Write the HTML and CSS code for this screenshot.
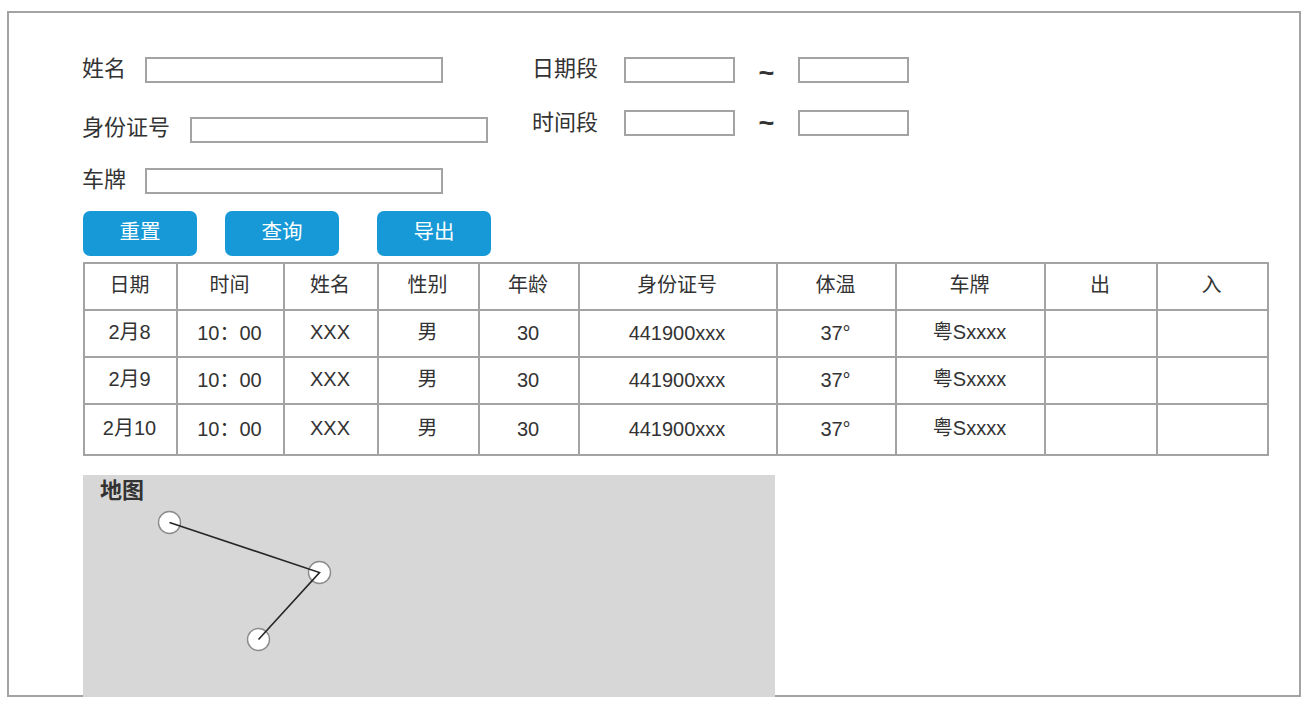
FILE: index.html
```html
<!DOCTYPE html>
<html lang="zh">
<head>
<meta charset="utf-8">
<title>查询</title>
<link rel="stylesheet" href="styles.css">
</head>
<body>
<main class="frame">
  <form class="filters">
    <div class="col col-left">
      <label class="field field-name"><span class="lbl lbl-name">姓名</span><input class="box box-wide" type="text"></label>
      <label class="field field-id"><span class="lbl lbl-id">身份证号</span><input class="box box-wide" type="text"></label>
      <label class="field field-plate"><span class="lbl lbl-name">车牌</span><input class="box box-wide" type="text"></label>
    </div>
    <div class="col col-right">
      <div class="field field-date"><span class="lbl lbl-range">日期段</span><input class="box box-short" type="text"><span class="tilde tilde-date">~</span><input class="box box-short" type="text"></div>
      <div class="field field-time"><span class="lbl lbl-range">时间段</span><input class="box box-short" type="text"><span class="tilde tilde-time">~</span><input class="box box-short" type="text"></div>
    </div>
  </form>
  <div class="actions">
    <button class="btn" type="button">重置</button>
    <button class="btn" type="button">查询</button>
    <button class="btn" type="button">导出</button>
  </div>
  <table class="grid">
    <colgroup>
      <col class="c1"><col class="c2"><col class="c3"><col class="c4"><col class="c5"><col class="c6"><col class="c7"><col class="c8"><col class="c9"><col class="c10">
    </colgroup>
    <thead>
      <tr class="row"><th>日期</th><th>时间</th><th>姓名</th><th>性别</th><th>年龄</th><th>身份证号</th><th>体温</th><th>车牌</th><th>出</th><th>入</th></tr>
    </thead>
    <tbody>
      <tr class="row"><td>2月8</td><td>10：00</td><td>XXX</td><td>男</td><td>30</td><td>441900xxx</td><td>37°</td><td>粤Sxxxx</td><td></td><td></td></tr>
      <tr class="row"><td>2月9</td><td>10：00</td><td>XXX</td><td>男</td><td>30</td><td>441900xxx</td><td>37°</td><td>粤Sxxxx</td><td></td><td></td></tr>
      <tr class="row row-last"><td>2月10</td><td>10：00</td><td>XXX</td><td>男</td><td>30</td><td>441900xxx</td><td>37°</td><td>粤Sxxxx</td><td></td><td></td></tr>
    </tbody>
  </table>
  <section class="map">
    <h2 class="map-title">地图</h2>
    <svg class="map-route" width="692" height="222" viewBox="0 0 692 222" aria-hidden="true">
      <circle class="stop" cx="86.5" cy="47.5" r="11"/>
      <circle class="stop" cx="236.5" cy="97.5" r="11"/>
      <circle class="stop" cx="175.5" cy="164.5" r="11"/>
      <polyline class="route" points="86.5,47.5 236.5,97.5 175.5,164.5"/>
    </svg>
  </section>
</main>
</body>
</html>
```
FILE: styles.css
```css
* { box-sizing: border-box; }
html, body { margin: 0; padding: 0; background: #fff; }
body {
  height: 706px;
  overflow: hidden;
  font-family: "Liberation Sans", "Noto Sans CJK SC", sans-serif;
  color: #333;
}
.frame {
  width: 1294px;
  height: 686px;
  margin: 11px 0 0 7px;
  padding: 44px 0 0 74px;
  border: 2px solid #a3a3a3;
}
.filters { display: flex; height: 154px; }
.col { display: flex; flex-direction: column; }
.col-left { width: 449px; }
.field { display: flex; align-items: center; height: 26px; }
.field-id { margin-top: 34px; }
.field-plate { margin-top: 25px; }
.field-time { margin-top: 27px; }
.lbl { font-size: 22px; line-height: 24px; position: relative; top: -1px; left: -1px; white-space: nowrap; }
.field-id .lbl { top: -2px; }
.field-time .lbl { top: 0; }
.lbl-name { width: 62px; }
.lbl-id { width: 107px; }
.lbl-range { width: 92px; }
.field-date .lbl, .field-time .lbl { left: 0; }
.box { height: 26px; padding: 0; border: 2px solid #a3a3a3; background: #fff; border-radius: 0; }
.box-wide { width: 298px; }
.box-short { width: 111px; }
.tilde {
  width: 63px;
  text-align: center;
  font-size: 27px;
  font-weight: 700;
  line-height: 24px;
}
.tilde-date { padding-top: 6px; }
.actions { display: flex; gap: 28px; height: 45px; margin-bottom: 6px; }
.btn {
  width: 114px;
  height: 45px;
  padding: 0 0 2px;
  border: 0;
  border-radius: 7px;
  background: #1699d6;
  color: #fff;
  font: 400 20.5px/1 "Liberation Sans", "Noto Sans CJK SC", sans-serif;
}
.btn + .btn + .btn { margin-left: 10px; }
.grid {
  width: 1186px;
  table-layout: fixed;
  border-collapse: collapse;
  font-size: 20px;
  text-align: center;
}
.c1 { width: 93px; }
.c2 { width: 107px; }
.c3 { width: 94px; }
.c4 { width: 101px; }
.c5 { width: 100px; }
.c6 { width: 198px; }
.c7 { width: 119px; }
.c8 { width: 149px; }
.c9 { width: 112px; }
.c10 { width: 111px; }
.row { height: 47px; }
.row-last { height: 51px; }
.grid th, .grid td {
  padding: 0 2px 2px 0;
  border: 2px solid #a3a3a3;
  font-weight: 400;
  white-space: nowrap;
}
.grid th { padding-bottom: 6px; }
.grid td:nth-child(1), .grid td:nth-child(4), .grid td:nth-child(8) { padding-bottom: 6px; }
.grid td:nth-child(2) { padding-bottom: 4px; }
.grid td:nth-child(5), .grid td:nth-child(6), .grid td:nth-child(7) { padding-bottom: 0; }
.map {
  position: relative;
  width: 692px;
  height: 222px;
  margin-top: 19px;
  background: #d7d7d7;
}
.map-title {
  margin: 0;
  padding: 3px 0 0 17px;
  font-size: 22px;
  line-height: 26px;
  font-weight: 700;
}
.map-route { position: absolute; left: 0; top: 0; }
.stop { fill: #fff; stroke: #8c8c8c; stroke-width: 1.4; }
.route { fill: none; stroke: #262626; stroke-width: 1.6; }
```
